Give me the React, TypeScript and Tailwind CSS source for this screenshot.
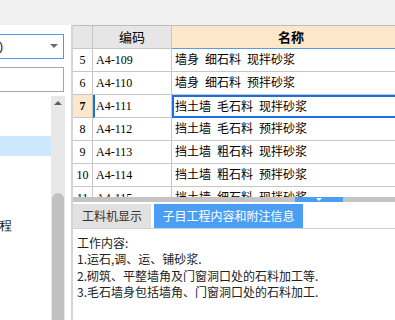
import React from 'react'

const rows = [
  { n: '5', code: 'A4-109', name: '墙身  细石料  现拌砂浆' },
  { n: '6', code: 'A4-110', name: '墙身  细石料  预拌砂浆' },
  { n: '7', code: 'A4-111', name: '挡土墙  毛石料  现拌砂浆', active: true },
  { n: '8', code: 'A4-112', name: '挡土墙  毛石料  预拌砂浆' },
  { n: '9', code: 'A4-113', name: '挡土墙  粗石料  现拌砂浆' },
  { n: '10', code: 'A4-114', name: '挡土墙  粗石料  预拌砂浆' },
  { n: '11', code: 'A4-115', name: '挡土墙  细石料  现拌砂浆' },
]

const notes = [
  '工作内容:',
  '1.运石,调、运、铺砂浆.',
  '2.砌筑、平整墙角及门窗洞口处的石料加工等.',
  '3.毛石墙身包括墙角、门窗洞口处的石料加工.',
]

function LeftPanel() {
  return <div className="w-[71px] h-full bg-white flex flex-col">
    <div className="pt-[9px] pr-[7px] flex flex-col gap-[8px]">
      <div className="h-[25px] border border-l-0 border-[#4a9af0] flex items-center justify-between pr-[5px]">
        <span className="text-[13px] text-[#222] leading-none -ml-[1px]">)</span>
        <svg width="8" height="5" viewBox="0 0 8 5"><path d="M0 0H8L4 4Z" fill="#6b6b6b" /></svg>
      </div>
      <div className="h-[25px] border border-l-0 border-[#a6a6a6]" />
    </div>
    <div className="flex-1 flex mt-[4px]">
      <div className="w-[51px] flex flex-col">
        <div className="mt-[40px] h-[20px] bg-[#cce8ff]" />
        <div className="mt-[59px] h-[20px] text-[13px] leading-[20px] text-[#222] -ml-[1px]">程</div>
      </div>
      <div className="w-[14px] bg-[#e8e8e8] flex flex-col">
        <div className="h-[12px] flex items-center justify-center">
          <svg width="8" height="5" viewBox="0 0 8 5"><path d="M0 5H8L4 1Z" fill="#606060" /></svg>
        </div>
        <div className="h-[85px]" />
        <div className="flex-1 mx-[1px] rounded-t-full bg-[#c1c1c1]" />
      </div>
    </div>
  </div>
}

function Table() {
  return <div className="h-[172px] overflow-hidden border-t border-[#bdbdbd]">
    <div className="w-[337px] grid grid-cols-[20px_79px_238px] text-[12px] text-black font-['Liberation_Serif','Noto_Sans_CJK_SC',serif]">
      <div className="h-[23px] bg-[#e6e6e6] border-r border-b border-[#c6c6c6]" />
      <div className="h-[23px] bg-[#e6e6e6] border-r border-b border-[#c6c6c6] flex items-center justify-center font-['Noto_Sans_CJK_SC',sans-serif] text-[13px]">编码</div>
      <div className="h-[23px] bg-[#fde7cb] border-b border-[#5b9be6] flex items-center justify-center font-['Noto_Sans_CJK_SC',sans-serif] text-[13px] font-bold">名称</div>
      {rows.map(r => <React.Fragment key={r.n}>
        <div className={`h-[23px] border-r border-b border-[#c6c6c6] flex items-center justify-center ${r.active ? 'bg-[#fde7cb] font-bold' : 'bg-white'}`}>{r.n}</div>
        <div className={`h-[23px] border-r border-b border-[#c6c6c6] flex items-center bg-white ${r.active ? 'border-l-2 border-l-[#1a6fe8] pl-[1px]' : 'pl-[3px]'}`}>{r.code}</div>
        <div className={`h-[23px] flex items-center bg-white whitespace-pre ${r.active ? 'border-2 border-[#1a6fe8] pl-[1px]' : 'border-b border-[#c6c6c6] pl-[3px]'}`}>{r.name}</div>
      </React.Fragment>)}
    </div>
  </div>
}

function Splitter() {
  return <div className="h-[5px] flex bg-[#c4c4c4]">
    <div className="w-[222px]" />
    <div className="w-[48px] bg-[#4a9ff5] flex items-center justify-center">
      <svg width="6" height="4" viewBox="0 0 6 4"><path d="M0 0H6L3 3Z" fill="#fff" /></svg>
    </div>
  </div>
}

function Detail() {
  return <div className="flex-1 flex flex-col bg-white font-['Noto_Sans_CJK_SC',sans-serif] text-[12px]">
    <div className="pt-[2px] flex gap-[3px] border-b border-[#d2d2d2]">
      <div className="w-[78px] h-[24px] bg-[#e1e1e1] text-[#333] flex items-center justify-center">工料机显示</div>
      <div className="w-[149px] h-[24px] bg-[#4a9ff5] text-white flex items-center justify-center">子目工程内容和附注信息</div>
    </div>
    <div className="pt-[6px] pl-[4px] leading-[16.3px] text-[#222]">
      {notes.map(t => <p key={t}>{t}</p>)}
    </div>
  </div>
}

export default function App() {
  return <div className="w-[395px] h-[320px] overflow-hidden flex flex-col bg-[#f0f0f0]">
    <div className="h-[25px] shrink-0" />
    <div className="flex-1 flex min-h-0">
      <LeftPanel />
      <div className="w-[2px] bg-[#d4d4d4]" />
      <div className="flex-1 min-w-0 flex flex-col bg-white">
        <Table />
        <Splitter />
        <Detail />
      </div>
    </div>
  </div>
}
